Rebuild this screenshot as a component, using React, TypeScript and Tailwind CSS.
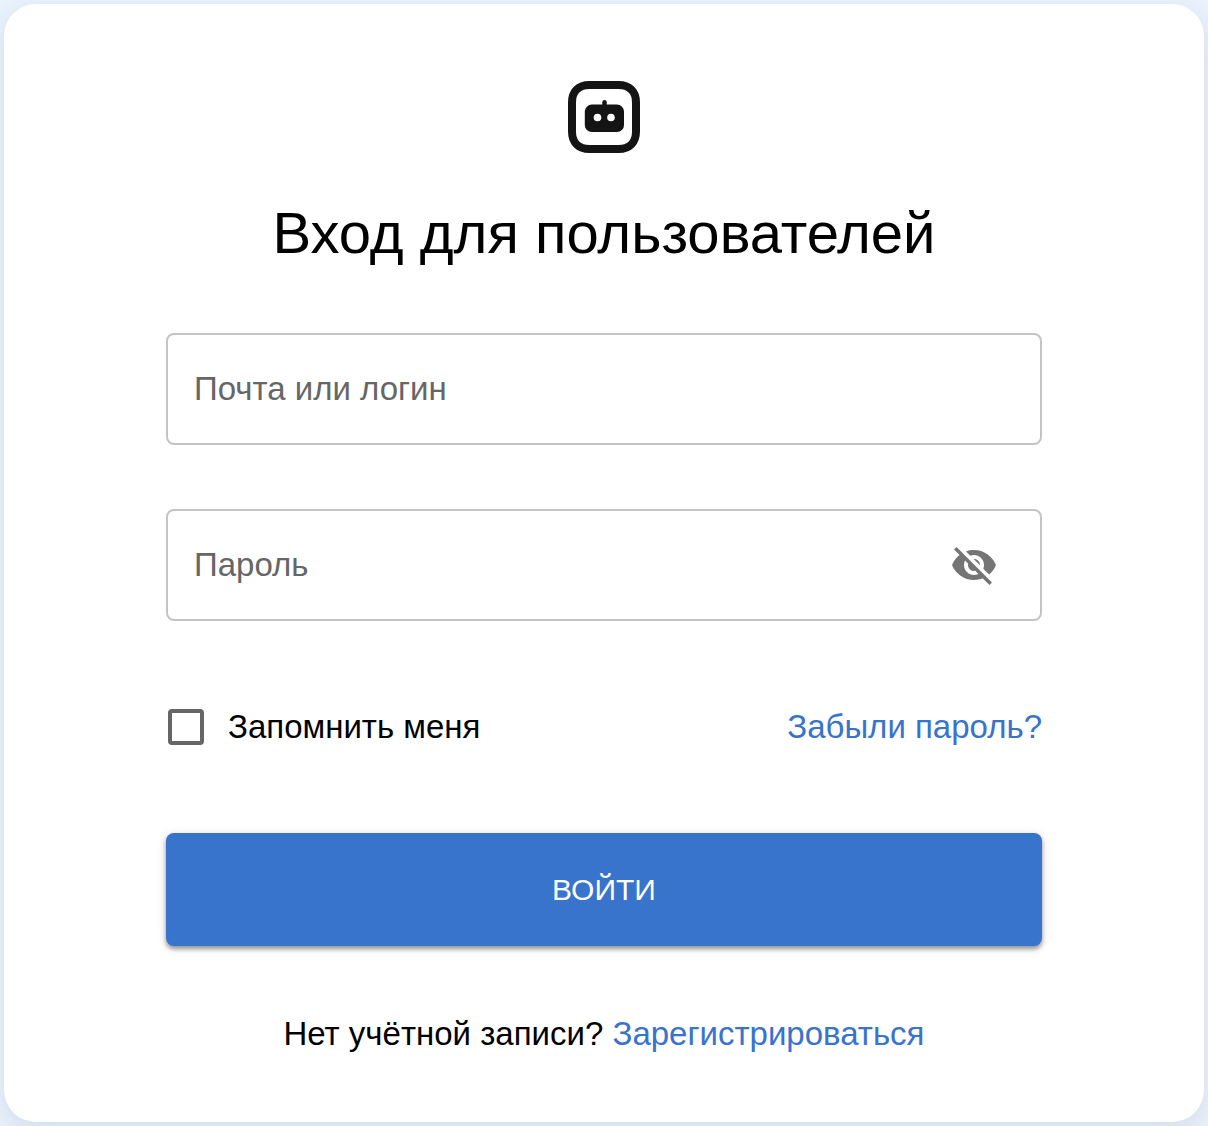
import React, { useState } from "react";
import { MdVisibility, MdVisibilityOff } from "react-icons/md";

const fieldClass =
    "peer block h-28 w-full rounded-lg border-2 border-[#c4c4c4] bg-transparent pl-[26px] text-black outline-none focus:border-[#3873cc]";

// sits inside the empty field, moves up onto the border once there is a value
const labelClass =
    "pointer-events-none absolute top-9 left-6 bg-white px-1 text-[#666666] peer-focus:-top-5 peer-focus:text-2xl peer-[:not(:placeholder-shown)]:-top-5 peer-[:not(:placeholder-shown)]:text-2xl";

const Logo = () => (
    <svg className="size-[72px]" viewBox="0 0 72 72" fill="none" aria-hidden="true">
        <path
            d="M21.5 4H50.5C61.5 4 68 10.5 68 21.5V50.5C68 61.5 61.5 68 50.5 68H21.5C10.5 68 4 61.5 4 50.5V21.5C4 10.5 10.5 4 21.5 4Z"
            stroke="#141414"
            strokeWidth="8"
        />
        <path d="M36.5 21.2V27" stroke="#141414" strokeWidth="4.4" strokeLinecap="round" />
        <rect x="16.8" y="23.6" width="39.2" height="27.4" rx="7" fill="#141414" />
        <circle cx="29.5" cy="36.5" r="3.8" fill="#fff" />
        <circle cx="43" cy="36.5" r="3.8" fill="#fff" />
    </svg>
);

const App = () => {
    const [showPassword, setShowPassword] = useState(false);

    return (
        <main className="bg-[#eaf2fc] p-1 font-['Liberation_Sans',Arial,sans-serif] text-[33px] leading-10 text-black">
            <form
                className="flex flex-col items-center rounded-[32px] bg-white px-[162px] pt-[77px] pb-[68px] shadow-[0_8px_24px_rgba(60,100,130,0.14)]"
                onSubmit={(e) => e.preventDefault()}
            >
                <Logo />
                <h1 className="mt-11 text-center text-[58px] leading-[72px] font-light whitespace-nowrap">
                    Вход для пользователей
                </h1>

                <div className="relative mt-16 w-full">
                    <input id="login" type="text" placeholder=" " className={fieldClass} />
                    <label htmlFor="login" className={labelClass}>Почта или логин</label>
                </div>

                <div className="relative mt-16 w-full">
                    <input
                        id="password"
                        type={showPassword ? "text" : "password"}
                        placeholder=" "
                        className={fieldClass}
                    />
                    <label htmlFor="password" className={labelClass}>Пароль</label>
                    <button
                        type="button"
                        aria-label="Показать пароль"
                        className="absolute inset-y-0 right-11 flex items-center text-[#757575]"
                        onClick={() => setShowPassword(!showPassword)}
                    >
                        {showPassword ? <MdVisibility className="size-12" /> : <MdVisibilityOff className="size-12" />}
                    </button>
                </div>

                <div className="mt-[86px] flex w-full items-center justify-between">
                    <label className="flex items-center gap-6 pl-0.5">
                        <input
                            type="checkbox"
                            className="size-9 appearance-none rounded-sm border-4 border-[#666666] checked:bg-[#3873cc]"
                        />
                        Запомнить меня
                    </label>
                    <a href="#forgot" className="text-[#3873cc]">Забыли пароль?</a>
                </div>

                <button
                    type="submit"
                    className="mt-[86px] h-[113px] w-full rounded-lg bg-[#3873cc] text-[30px] text-white uppercase shadow-[0_3px_4px_rgba(0,0,0,0.35),0_2px_10px_rgba(0,0,0,0.15)]"
                >
                    Войти
                </button>

                <p className="mt-[68px] text-center">
                    Нет учётной записи? <a href="#register" className="text-[#3873cc]">Зарегистрироваться</a>
                </p>
            </form>
        </main>
    );
};

export default App;
